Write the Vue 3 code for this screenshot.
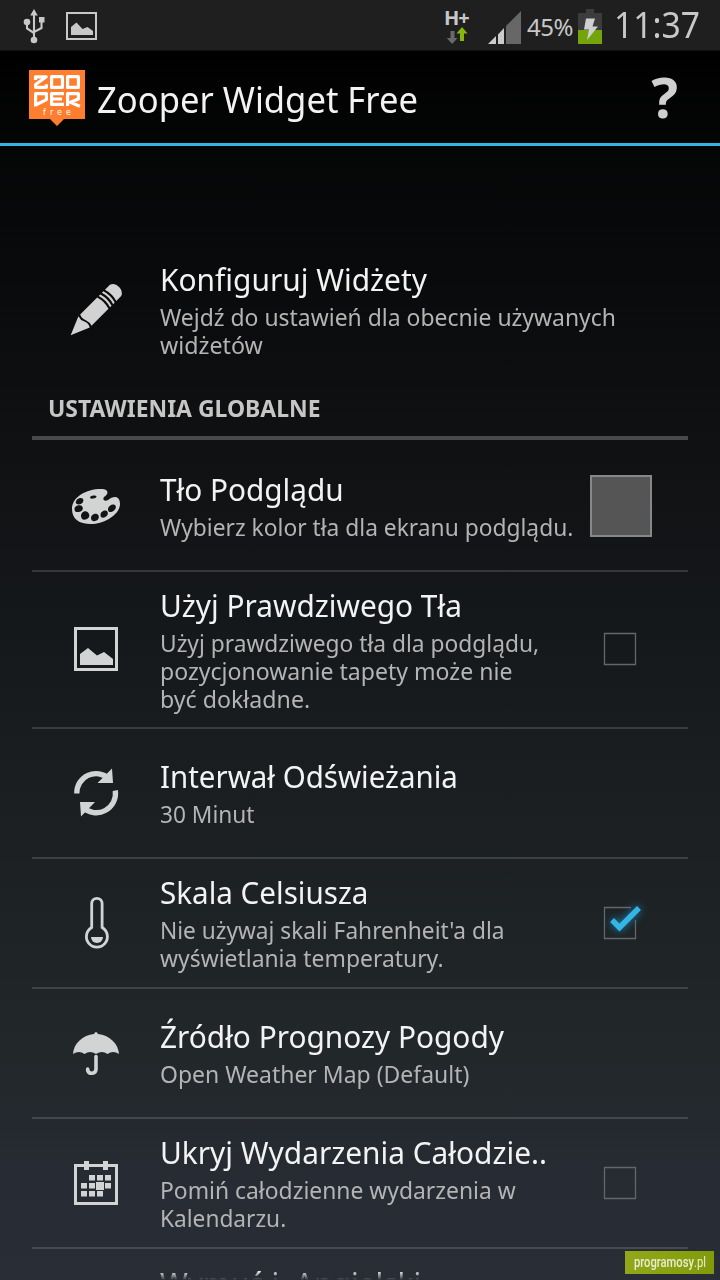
<script setup>
// Each text line carries its horizontal condensing factor.
const rows = [
  { id: 'bg', icon: 'palette', title: ['Tło Podglądu', 0.96], lines: [['Wybierz kolor tła dla ekranu podglądu.', 0.949]], control: 'swatch' },
  { id: 'real', icon: 'picture', title: ['Użyj Prawdziwego Tła', 0.962], lines: [['Użyj prawdziwego tła dla podglądu,', 0.948], ['pozycjonowanie tapety może nie', 0.961], ['być dokładne.', 0.965]], control: 'box' },
  { id: 'interval', icon: 'refresh', title: ['Interwał Odświeżania', 0.951], lines: [['30 Minut', 0.945]] },
  { id: 'celsius', icon: 'thermo', title: ['Skala Celsiusza', 0.955], lines: [["Nie używaj skali Fahrenheit'a dla", 0.945], ['wyświetlania temperatury.', 0.954]], control: 'checked' },
  { id: 'source', icon: 'umbrella', title: ['Źródło Prognozy Pogody', 0.962], lines: [['Open Weather Map (Default)', 0.957]] },
  { id: 'hide', icon: 'calendar', title: ['Ukryj Wydarzenia Całodzie..', 0.963], lines: [['Pomiń całodzienne wydarzenia w', 0.953], ['Kalendarzu.', 0.945]], control: 'box' },
]
const fit = (s) => ({ transform: `scaleX(${s})` })
</script>

<template>
  <div class="screen">
    <header class="status">
      <svg class="st-left" width="110" height="50" viewBox="0 0 110 50" fill="none" stroke="#c8c8c8">
        <path d="M34 14V38M27 23v5.500l7 4.500M41.500 20v8l-7.500 4" stroke-width="2.100" />
        <path d="M34 9l3.800 6.500h-7.600zM39 17h5.500v5.500H39z" fill="#c8c8c8" stroke="none" />
        <circle cx="27" cy="22" r="3.300" fill="#c8c8c8" stroke="none" />
        <circle cx="34" cy="40" r="3.300" fill="#c8c8c8" stroke="none" />
        <rect x="67" y="13" width="29" height="26" stroke-width="2" />
        <path d="M71 35v-8l5.500-4.500 6 6.500 5-2 5.500 4V35z" fill="#c8c8c8" stroke="none" />
      </svg>
      <div class="st-right">
        <div class="net">
          <span class="hplus">H+</span>
          <svg width="24" height="18" viewBox="0 0 24 18">
            <path d="M5.500 4h4v7h3l-5.300 6-5.500-6h3.800z" fill="#6a6a6a" />
            <path d="M17 0l5.500 6.500H19V14h-4V6.500h-3.500z" fill="#86b80c" />
          </svg>
        </div>
        <svg class="signal" width="34" height="34" viewBox="0 0 34 34">
          <path d="M0 33l8-8v8zM10 23.500l6-6.500v16h-6z" fill="#cbcbcb" />
          <path d="M18 15L33 0v33H18z" fill="#676767" />
        </svg>
        <span class="pct">45%</span>
        <svg class="battery" width="24" height="35" viewBox="0 0 24 35">
          <path d="M8 0h8v4h8v17H0V4h8z" fill="#3c3c3c" />
          <path d="M0 21h24v14H0z" fill="#74a40c" />
          <path d="M8 9.500h9l-2.500 8h5.500L9 31l2-10.500H6z" fill="#d0d0d0" />
        </svg>
        <span class="clock">11:37</span>
      </div>
    </header>

    <div class="bar">
      <svg class="logo" width="56" height="56" viewBox="0 0 56 56">
        <path d="M0 0h56v49H35l-7 7-7-7H0z" fill="#ff7d2e" />
        <g fill="none" stroke="#fff" stroke-width="3.200" stroke-linejoin="round">
          <path d="M6.500 10V6.800h10.800L6.600 14.500v2.800h10.800v-3M22.600 6.600h10.800v10.800H22.600zM38.600 6.600h10.800v10.800H38.600z" />
          <path d="M6.600 36.500V23.600h10.800v6L6.600 35M35 23.600H22.600v10.800H35M22.600 29H33M38.600 36V23.600h10.800v5.500l-8 3.200 9.500 4" />
        </g>
        <text class="free" x="14" y="44.500" textLength="28" lengthAdjust="spacing">free</text>
      </svg>
      <h1><span>Zooper Widget Free</span></h1>
      <span class="help">?</span>
    </div>

    <main>
      <section class="row first">
        <svg class="icon" viewBox="0 0 64 64">
          <g transform="translate(7 59) rotate(-45)" fill="#d2d2d2">
            <path d="M-.5 0L18.500-8q-1.500 4 .5 8 2 4-.5 8z" />
            <path d="M21-8H45q2.500 8 0 16H21q1.500-4 0-8-2-4 0-8z" />
            <path d="M47.200-8h2.200q2.500 8 0 16h-2.200q2.500-8 0-16zM51.600-8h2.200q2.500 8 0 16h-2.200q2.500-8 0-16zM56-8h7q5 2 5 8t-5 8h-7q2.500-8 0-16z" />
          </g>
        </svg>
        <div class="copy">
          <h2><span :style="fit(0.964)">Konfiguruj Widżety</span></h2>
          <p><span :style="fit(0.955)">Wejdź do ustawień dla obecnie używanych</span></p>
          <p><span :style="fit(0.968)">widżetów</span></p>
        </div>
      </section>

      <h3><span>USTAWIENIA GLOBALNE</span></h3>

      <section v-for="r in rows" :key="r.id" class="row" :class="r.id">
        <svg class="icon" viewBox="0 0 64 64" fill="#d2d4d3">
          <path v-if="r.icon === 'palette'" fill-rule="evenodd" d="M8 34C8 22 22 14 37 14c8 0 8 5 3 8-2 3 1 5 4 3 6-5 12-4 12 4 0 10-15 20-29 20C15 49 8 44 8 34zM26 22.500q0 1.500 3 1 3.500-.5 3.500-2-.5-1.500-3.500-1-3 .5-3 2zM12 28c1 2.500 6 1.500 7-1s0-4-2.500-4-5.500 3-4.500 5zM10.500 34c0 3.500 3 3.500 6 2.500s3-5 .5-6-6.500.5-6.500 3.500zM17 41c.5 4 3 4.500 6 3s3-5 .5-7-6.500.5-6.500 4zM27 43c0 3 2.500 4 5.500 2.500s3-5.500.5-6.500-6 1-6 4zM36.500 40c0 3 2.500 3.500 5.500 1.500s2-6-.5-6-5 1.500-5 4.500zM44 34.500c0 3 3 3.500 6 1s2-6-.5-6-5.500 2-5.500 5z" />
          <g v-else-if="r.icon === 'picture'">
            <path fill-rule="evenodd" d="M10 10h44v44H10zM13 13v38h38V13z" />
            <path d="M16 48V37l8-6 9 7.500 7-3.500 9 7v6z" />
          </g>
          <g v-else-if="r.icon === 'refresh'">
            <path d="M12.800 32.500A19.300 19.300 0 0 1 45 17.500M51.300 29.500A19.300 19.300 0 0 1 19 46.500" fill="none" stroke="#d2d4d3" stroke-width="5.300" />
            <path d="M48 7.500l1 14.500H33.500zM17 55.500L16 41h15z" />
          </g>
          <g v-else-if="r.icon === 'thermo'">
            <path d="M27.700 36.500V12.500a5.200 5.200 0 0 1 10.400 0V36.500a10.500 10.500 0 1 1-10.400 0z" fill="none" stroke="#d2d4d3" stroke-width="2.800" />
            <path d="M27 46h12a6 6 0 0 1-12 0z" />
          </g>
          <g v-else-if="r.icon === 'umbrella'">
            <path d="M9 33C9.500 22.500 19 14 30 13q2-4 4 0C45 14 54.500 22.500 55 33q-6-4-11.500 0-5.500-4-11.500 0-6-4-11.500 0Q15 29 9 33z" />
            <path d="M32 35.500V48.500a4.300 4.300 0 0 1-8.300 1V48" fill="none" stroke="#d2d4d3" stroke-width="3.600" stroke-linecap="round" />
          </g>
          <g v-else>
            <path fill-rule="evenodd" d="M10 13h44v41H10zM13 16v35h38V16z" />
            <path d="M20 10h5v9h-5zM39 10h5v9h-5zM25 24h6v5.500h-6zM33 24h6v5.500h-6zM41 24h6v5.500h-6zM17 32h6v5.500h-6zM25 32h6v5.500h-6zM32 31h8v8h-8zM41 32h6v5.500h-6zM17 40h6v5.500h-6zM25 40h6v5.500h-6zM33 40h6v5.500h-6z" />
          </g>
        </svg>
        <div class="copy">
          <h2><span :style="fit(r.title[1])">{{ r.title[0] }}</span></h2>
          <p v-for="l in r.lines" :key="l[0]"><span :style="fit(l[1])">{{ l[0] }}</span></p>
        </div>
        <div v-if="r.control === 'swatch'" class="swatch"></div>
        <svg v-else-if="r.control" class="check" width="64" height="64" viewBox="0 0 64 64">
          <path :d="r.control === 'checked' ? 'M43 16.500H16.500V47.500H47.500V29' : 'M16.500 16.500h31v31h-31z'" fill="none" stroke="#63676a" stroke-width="1.300" />
          <path v-if="r.control === 'checked'" class="tick" d="M24 29L31.500 36.500L51 17" fill="none" stroke="#35b4e6" stroke-width="5.500" />
        </svg>
      </section>
      <section class="row last">
        <div class="copy"><h2><span :style="fit(0.964)">Wymuś j. Angielski</span></h2></div>
      </section>
    </main>
    <div class="fade"></div>
    <div class="mark"><span><b>programosy</b>.pl</span></div>
  </div>
</template>

<style>
body { margin: 0; background: #000; }
</style>
<style scoped>
.screen { position: relative; width: 720px; height: 1280px; overflow: hidden; font-family: "Noto Sans", sans-serif; color: #f3f3f3; background: linear-gradient(#000 0, #08090a 240px, #111315 500px, #191d20 750px, #22272a 1050px, #272b33 1180px, #292d35 1280px); display: flex; flex-direction: column; }
.status { height: 50px; flex: none; background: #1f1f1f; display: flex; justify-content: space-between; border-bottom: 1px solid #111; color: #c8c8c8; }
.st-right { display: flex; width: 275px; }
.net { display: flex; flex-direction: column; width: 26px; margin-right: 17px; padding-top: 8px; }
.hplus { font: bold 20px/19px "Noto Sans", sans-serif; letter-spacing: -1px; height: 19px; margin-left: -1px; }
.signal { margin-top: 11px; }
.pct { font-size: 24px; line-height: 54px; margin: 0 4px 0 5px; width: 47px; letter-spacing: -0.500px; }
.battery { margin-top: 9px; }
.clock { font-size: 36px; line-height: 49px; margin-left: 12px; width: 85px; transform: scaleX(.935); transform-origin: left; }
.bar { height: 92px; flex: none; border-bottom: 3px solid #33b5e5; background: linear-gradient(#000, #040605); display: flex; }
.logo { margin: 19px 0 0 29px; }
.free { font: 8px "DejaVu Sans", sans-serif; fill: #fff; }
h1 { margin: 0 0 0 12px; font-size: 36px; font-weight: 400; line-height: 97px; flex: 1; white-space: nowrap; }
h1 span, h2 span, h3 span, p span { display: inline-block; transform-origin: left; }
h1 span { transform: scaleX(.961); }
h3 span { transform: scaleX(.956); }
.help { font-size: 56px; line-height: 90px; font-weight: 700; color: #d0d0d0; margin-right: 42px; }
main { padding: 114px 32px 0; flex: 1; min-height: 0; }
.row { display: flex; align-items: center; height: 128px; border-bottom: 2px solid rgba(255, 255, 255, .14); position: relative; }
.icon { width: 64px; height: 64px; flex: none; margin: 0 32px; }
.copy { flex: 1; white-space: nowrap; padding-bottom: 1px; }
h2 { margin: 0 0 5px; font-size: 31px; font-weight: 400; line-height: 38px; }
p { margin: 0; font-size: 24px; line-height: 28px; color: #b4b4b4; }
.first { height: 100px; border: 0; }
.first .icon { margin-top: -4px; }
h3 { margin: 18px 0 0; padding-left: 16px; height: 58px; line-height: 60px; font-size: 24px; border-bottom: 4px solid #46484a; color: #c6c6c6; }
.bg { height: 130px; }
.bg .copy { padding-bottom: 0; }
.bg .icon { margin-top: 4px; }
.real { height: 155px; }
.real .copy { padding-bottom: 0; }
.real .icon { margin-top: -1px; }
.last { border: 0; padding: 15px 0 0 128px; align-items: flex-start; }
.swatch { position: absolute; right: 36px; top: 35px; width: 58px; height: 58px; background: #555; border: 2px solid #888; }
.check { position: absolute; right: 36px; top: 32px; }
.real .check { top: 45px; }
.tick { filter: drop-shadow(0 0 4px #168bbb); }
.fade { position: absolute; left: 0; right: 0; bottom: 0; height: 9px; background: linear-gradient(transparent, #292d35); }
.mark { position: absolute; left: 625px; top: 1251px; width: 89px; height: 23px; background: linear-gradient(100deg, #92a81a, #829a08); color: #e8ecd2; font: 14px/23px Roboto, sans-serif; display: flex; justify-content: center; white-space: nowrap; }
.mark span { display: block; transform: scaleX(.8); }
.mark b { font-weight: 500; }
</style>
